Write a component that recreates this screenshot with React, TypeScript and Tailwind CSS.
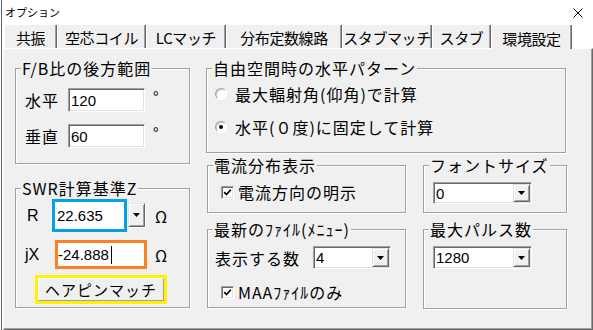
import React from 'react';

const num = "font-['Liberation_Sans',Arial,sans-serif]";
const sunken =
  'bg-white border border-t-[#a0a0a0] border-l-[#a0a0a0] border-b-white border-r-white shadow-[inset_1px_1px_0_#696969,inset_-1px_-1px_0_#e3e3e3]';
const raised =
  'bg-[#f0f0f0] border border-t-[#e3e3e3] border-l-[#e3e3e3] border-b-[#696969] border-r-[#696969] shadow-[inset_1px_1px_0_#fff,inset_-1px_-1px_0_#a0a0a0]';

const Arrow = () => (
  <svg width="7" height="4" viewBox="0 0 7 4">
    <path d="M0 0h7L3.5 4z" fill="#000" />
  </svg>
);

const DropButton = ({ className = '' }: { className?: string }) => (
  <div className={`flex items-center justify-center ${raised} ${className}`}>
    <Arrow />
  </div>
);

const Edit = ({ value, className }: { value: string; className: string }) => (
  <div className={`${sunken} flex items-center pl-[2px] text-[15px] leading-none ${num} ${className}`}>{value}</div>
);

const Combo = ({ value, className }: { value: string; className: string }) => (
  <div className={`${sunken} flex p-px ${className}`}>
    <div className={`flex-1 flex items-center pl-px text-[15px] leading-none ${num}`}>{value}</div>
    <DropButton className="w-[17px]" />
  </div>
);

const Radio = ({ checked }: { checked?: boolean }) => (
  <div className="w-[12px] h-[12px] rounded-full bg-white border border-t-[#a0a0a0] border-l-[#a0a0a0] border-b-white border-r-white shadow-[inset_1px_1px_0_#c8c8c8] flex items-center justify-center">
    {checked && <div className="w-[4px] h-[4px] rounded-full bg-black" />}
  </div>
);

const Check = () => (
  <div className={`w-[13px] h-[13px] ${sunken} flex items-center justify-center`}>
    <svg width="9" height="9" viewBox="0 0 9 9">
      <path d="M1.2 4.2l2.3 2.4L7.8 1.8" stroke="#000" strokeWidth="1.7" fill="none" />
    </svg>
  </div>
);

const Group = ({ title, className, children }: { title: string; className: string; children?: React.ReactNode }) => (
  <div className={`relative border border-[#a0a0a0] shadow-[inset_1px_1px_0_#fff,1px_1px_0_#fff] ${className}`}>
    <span className="absolute left-[5px] -top-[9px] bg-[#f0f0f0] px-px text-[16px] leading-[16px] tracking-[1px] whitespace-nowrap">
      {title}
    </span>
    {children}
  </div>
);

const tabs = [
  { label: '共振', w: 'w-[53px]' },
  { label: '空芯コイル', w: 'w-[89px]' },
  { label: 'LCマッチ', w: 'w-[80px]' },
  { label: '分布定数線路', w: 'w-[116px]' },
  { label: 'スタブマッチ', w: 'w-[90px]' },
  { label: 'スタブ', w: 'w-[59px]' },
  { label: '環境設定', w: 'w-[81px]', active: true },
];

export default function App() {
  return (
    <div className="w-[593px] h-[330px] bg-white flex overflow-hidden text-black font-['Noto_Sans_CJK_JP','Noto_Sans',sans-serif]">
      <div className="w-px" />
      <div className="w-px bg-[#646464]" />
      <div className="flex-1 flex flex-col">
        {/* title bar */}
        <div className="h-[25px] flex items-center pl-[3px] text-[11px] leading-none">
          <span>オプション</span>
          <svg className="ml-auto mr-[10px]" width="10" height="10" viewBox="0 0 10 10">
            <path d="M0.5 0.5l9 9M9.5 0.5l-9 9" stroke="#000" strokeWidth="1" />
          </svg>
        </div>

        {/* tabs */}
        <div className="h-[23px] flex items-start pl-[2px]">
          {tabs.map(t => (
            <div
              key={t.label}
              className={`${t.w} flex items-center justify-center whitespace-nowrap overflow-hidden bg-[#f0f0f0] border-l border-l-white border-r border-r-[#696969] shadow-[inset_-1px_0_0_#a0a0a0] text-[15px] tracking-[-0.4px] leading-none pt-[2px] ${
                t.active ? 'h-[24px] relative z-10 -mb-px' : 'h-[23px]'
              }`}
            >
              {t.label}
            </div>
          ))}
        </div>

        {/* panel */}
        <div className="ml-px w-[590px] h-[282px] bg-[#f0f0f0] border border-t-white border-l-white border-r-[#696969] border-b-[#696969] shadow-[inset_-1px_-1px_0_#a0a0a0] pl-[11px] pt-[19px] flex items-start text-[16px] leading-[16px]">
          {/* left column */}
          <div className="w-[175px] flex flex-col">
            <Group title="F/B比の後方範囲" className="h-[96px]">
              <div className="pt-[19px] pl-[9px] flex flex-col gap-[12px]">
                <div className="flex items-center">
                  <span className="w-[43px] tracking-[1px]">水平</span>
                  <Edit value="120" className="w-[77px] h-[24px]" />
                  <span className="ml-[8px] -mt-[6px] text-[15px]">°</span>
                </div>
                <div className="flex items-center">
                  <span className="w-[43px] tracking-[1px]">垂直</span>
                  <Edit value="60" className="w-[77px] h-[24px]" />
                  <span className="ml-[8px] -mt-[6px] text-[15px]">°</span>
                </div>
              </div>
            </Group>

            <Group title="SWR計算基準Z" className="h-[120px] mt-[24px]">
              <div className="pt-[10px] flex flex-col">
                <div className="flex items-center pl-[11px]">
                  <span className={`w-[25px] ${num}`}>R</span>
                  <div className={`w-[75px] h-[33px] bg-white border-[3px] border-[#00a2e8] flex items-center pl-[2px] text-[15px] leading-none ${num}`}>
                    22.635
                  </div>
                  <div className="ml-px border-b border-r border-white">
                    <DropButton className="w-[17px] h-[24px]" />
                  </div>
                  <span className="ml-[9px]">Ω</span>
                </div>
                <div className="flex items-center pl-[9px] mt-[8px]">
                  <span className={`w-[30px] ${num}`}>jX</span>
                  <div className={`w-[92px] h-[29px] bg-white border-[3px] border-[#ff7f27] flex items-center text-[15px] leading-none ${num}`}>
                    -24.888
                    <span className="ml-[2px] w-px h-[18px] bg-black" />
                  </div>
                  <span className="ml-[8px]">Ω</span>
                </div>
                <div className="ml-[19px] mt-[6px] w-[132px] h-[29px] border-[3px] border-[#fff200]">
                  <div className="w-full h-full bg-[#f0f0f0] border border-t-white border-l-white border-b-[#a0a0a0] border-r-[#a0a0a0] flex items-center justify-center text-[15px] tracking-[1px]">
                    ヘアピンマッチ
                  </div>
                </div>
              </div>
            </Group>
          </div>

          {/* right area */}
          <div className="ml-[16px] w-[361px] flex flex-col">
            <Group title="自由空間時の水平パターン" className="w-[360px] h-[85px]">
              <div className="pt-[16px] pl-[8px] flex flex-col gap-[15px]">
                <div className="h-[18px] flex items-center gap-[8px]">
                  <Radio />
                  <span className="tracking-[1px]">最大輻射角(仰角)で計算</span>
                </div>
                <div className="h-[18px] flex items-center gap-[8px]">
                  <Radio checked />
                  <span className="tracking-[1px]">水平(０度)に固定して計算</span>
                </div>
              </div>
            </Group>

            <div className="mt-[12px] flex items-start">
              <div className="ml-px w-[199px] flex flex-col">
                <Group title="電流分布表示" className="h-[48px]">
                  <div className="pt-[17px] pl-[13px] h-[18px] box-content flex items-center gap-[4px]">
                    <Check />
                    <span className="tracking-[1px]">電流方向の明示</span>
                  </div>
                </Group>
                <Group title="最新のﾌｧｲﾙ(ﾒﾆｭｰ)" className="h-[79px] mt-[16px]">
                  <div className="pt-[16px] pl-[7px] flex flex-col">
                    <div className="flex items-center">
                      <span className="w-[98px] tracking-[1px]">表示する数</span>
                      <Combo value="4" className="w-[78px] h-[23px]" />
                    </div>
                    <div className="mt-[14px] ml-[6px] h-[18px] flex items-center gap-[4px]">
                      <Check />
                      <span className="tracking-[1px]">MAAﾌｧｲﾙのみ</span>
                    </div>
                  </div>
                </Group>
              </div>

              <div className="ml-[17px] w-[144px] flex flex-col">
                <Group title="フォントサイズ" className="h-[48px]">
                  <div className="pt-[16px] pl-[9px]">
                    <Combo value="0" className="w-[99px] h-[22px]" />
                  </div>
                </Group>
                <Group title="最大パルス数" className="h-[80px] mt-[16px]">
                  <div className="pt-[16px] pl-[9px]">
                    <Combo value="1280" className="w-[99px] h-[23px]" />
                  </div>
                </Group>
              </div>
            </div>
          </div>
        </div>
      </div>
    </div>
  );
}
